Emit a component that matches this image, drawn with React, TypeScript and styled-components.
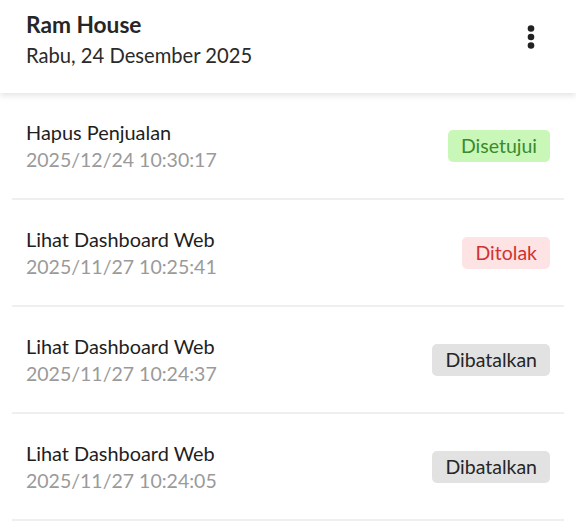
import React from "react";
import styled, { createGlobalStyle } from "styled-components";

const GlobalStyle = createGlobalStyle`
  html, body {
    margin: 0;
    padding: 0;
    background: #ffffff;
    font-family: "Lato", "Noto Sans", sans-serif;
  }
`;

type Status = "approved" | "rejected" | "cancelled";

const STATUS_LABEL: Record<Status, string> = {
  approved: "Disetujui",
  rejected: "Ditolak",
  cancelled: "Dibatalkan",
};

const STATUS_COLORS: Record<Status, { bg: string; fg: string }> = {
  approved: { bg: "#c8f7b8", fg: "#3b8a2c" },
  rejected: { bg: "#fde3e3", fg: "#d2322f" },
  cancelled: { bg: "#e2e2e2", fg: "#262626" },
};

const items: { title: string; time: string; status: Status }[] = [
  { title: "Hapus Penjualan", time: "2025/12/24 10:30:17", status: "approved" },
  { title: "Lihat Dashboard Web", time: "2025/11/27 10:25:41", status: "rejected" },
  { title: "Lihat Dashboard Web", time: "2025/11/27 10:24:37", status: "cancelled" },
  { title: "Lihat Dashboard Web", time: "2025/11/27 10:24:05", status: "cancelled" },
];

const Page = () => {
  return (
    <Screen>
      <GlobalStyle />
      <Header>
        <HeaderText>
          <Title>Ram House</Title>
          <Subtitle>Rabu, 24 Desember 2025</Subtitle>
        </HeaderText>
        <MenuButton aria-label="menu">
          <svg width="8" height="24" viewBox="0 0 8 24">
            <circle cx={4} cy={3.5} r={3.3} fill="#222" />
            <circle cx={4} cy={12} r={3.3} fill="#222" />
            <circle cx={4} cy={20.5} r={3.3} fill="#222" />
          </svg>
        </MenuButton>
      </Header>

      <List>
        {items.map((item, i) => (
          <Row key={i}>
            <RowText>
              <RowTitle>{item.title}</RowTitle>
              <RowTime>{item.time}</RowTime>
            </RowText>
            <Badge $status={item.status}>{STATUS_LABEL[item.status]}</Badge>
          </Row>
        ))}
      </List>
    </Screen>
  );
};

const Screen = styled.div`
  width: 576px;
  min-height: 527px;
  background: #fff;
  overflow: hidden;
`;

const Header = styled.header`
  display: flex;
  align-items: flex-start;
  justify-content: space-between;
  height: 93px;
  box-sizing: border-box;
  padding: 9px 26px 0 26px;
  background: #fff;
  box-shadow: 0 3px 6px rgba(0, 0, 0, 0.1);
  position: relative;
  z-index: 1;
`;

const HeaderText = styled.div`
  display: flex;
  flex-direction: column;
`;

const Title = styled.div`
  font-size: 22.7px;
  font-weight: 700;
  color: #262626;
  line-height: 32px;
`;

const Subtitle = styled.div`
  font-size: 20.2px;
  color: #2a2a2a;
  line-height: 28px;
`;

const MenuButton = styled.div`
  margin-top: 16px;
  margin-right: 15px;
  display: flex;
`;

const List = styled.div`
  display: flex;
  flex-direction: column;
  padding: 0 12px;
`;

const Row = styled.div`
  display: flex;
  align-items: center;
  justify-content: space-between;
  height: 107px;
  box-sizing: border-box;
  padding: 0 14px;
  border-bottom: 2px solid #efefef;
`;

const RowText = styled.div`
  display: flex;
  flex-direction: column;
`;

const RowTitle = styled.div`
  font-size: 19.9px;
  color: #1e1e1e;
  line-height: 27px;
`;

const RowTime = styled.div`
  font-size: 19.5px;
  color: #9a9a9a;
  line-height: 27px;
`;

const Badge = styled.span<{ $status: Status }>`
  display: inline-flex;
  align-items: center;
  height: 32px;
  padding: 0 13px;
  border-radius: 5px;
  font-size: 19.5px;
  background: ${(p) => STATUS_COLORS[p.$status].bg};
  color: ${(p) => STATUS_COLORS[p.$status].fg};
`;

export default Page;
